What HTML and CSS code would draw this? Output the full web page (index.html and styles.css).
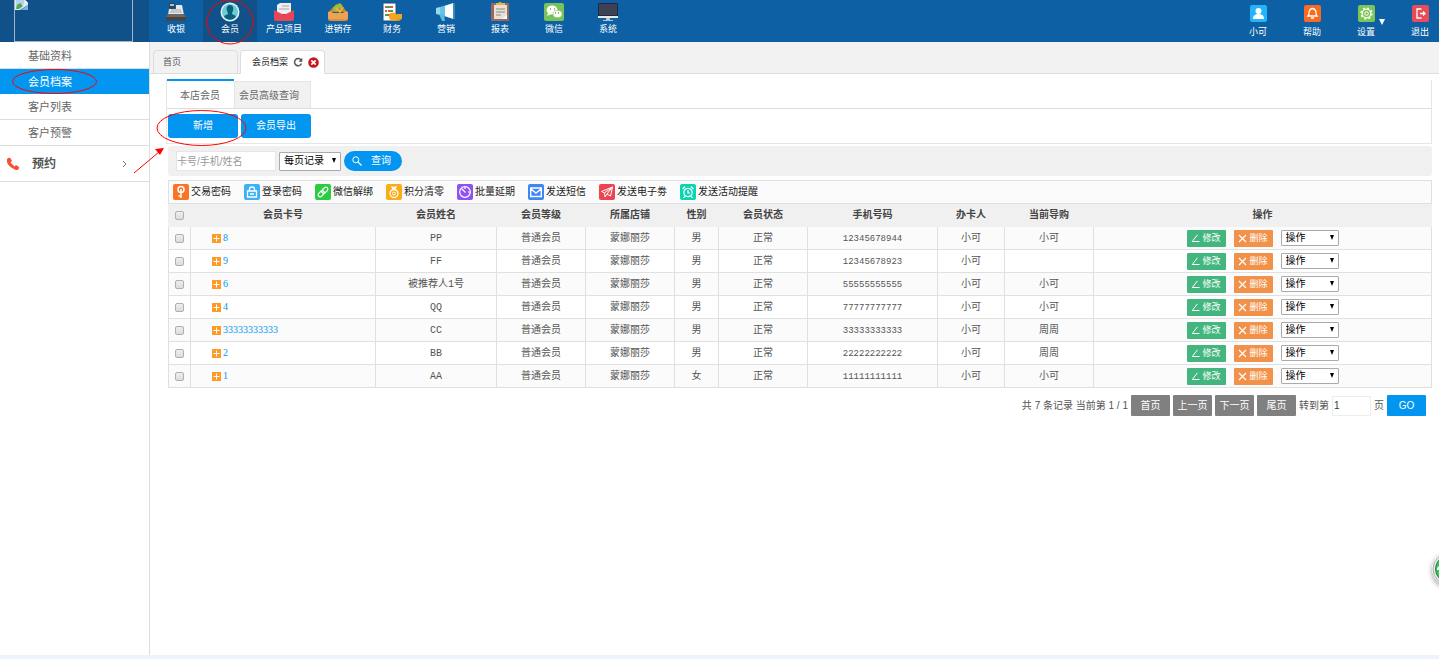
FILE: index.html
```html
<!DOCTYPE html>
<html lang="zh-CN">
<head>
<meta charset="utf-8">
<title>会员档案</title>
<link rel="stylesheet" href="styles.css">
</head>
<body>
<svg class="defs" aria-hidden="true">
  <symbol id="plus" viewBox="0 0 9 9"><rect width="9" height="9" fill="#fd9a28"/><path d="M4.500 1.500v6M1.500 4.500h6" stroke="#fff" stroke-width="1"/></symbol>
  <symbol id="edit" viewBox="0 0 9 9"><path d="M6.500 .8 2 6.500M1 7.500h7.500M2 6.500 1.300 7.500" stroke="#fff" fill="none"/></symbol>
  <symbol id="cross" viewBox="0 0 9 9"><path d="m1 1 7 7M8 1 1 8" stroke="#fff" stroke-width="1.200"/></symbol>
</svg>
<header class="top">
  <div class="brand"><div class="logo">
    <svg width="14" height="11" viewBox="0 0 14 11"><path d="M0 0h10l3 3v2L5 10H0z" fill="#dce9f7"/><path d="M1 0h8v4L2 8H1z" fill="#b5d2f4"/><path d="m1 9 1-4 3-2 3 3-4 3z" fill="#58a843"/><path d="m10 0 3 3h-3z" fill="#fff"/><path d="m6 10 7-5v5z" fill="#7fb3dd"/></svg>
  </div></div>
  <nav class="nav">
    <a href="#"><svg viewBox="0 0 20 20"><path d="M3 1h6v5H3z" fill="#34404c"/><path d="M4 2h4v2H4z" fill="#a9c4d4"/><path d="M5 5h2v3H5z" fill="#34404c"/><path d="M10 3h6l2 10H2l1-6h7z" fill="#e8e8e8"/><path d="M5 8h10M4 10h12" stroke="#a3a9ae"/><path d="M2 12h16l2 3v3H0v-3z" fill="#686868"/><path d="M0 15h20v4H0z" fill="#454545"/></svg>收银</a>
    <a href="#" class="on"><svg viewBox="0 0 20 20"><circle cx="10" cy="10" r="9.500" fill="#e4f4f6"/><circle cx="10" cy="10" r="8" fill="#6ccbd4"/><path d="M10 3c4 0 4 5 2 8v1l4 2c-2 5-10 5-12 0l4-2v-1C6 8 6 3 10 3z" fill="#09627d"/></svg>会员</a>
    <a href="#"><svg viewBox="0 0 20 20"><path d="M1 9h18v10H1z" fill="#b92f3b"/><path d="m3 3 3-2h11v11H3z" fill="#eee"/><path d="M8 4h7M5 7h10" stroke="#a9a9a9"/><path d="m0 8 10 5 10-5v9q0 2-2 2H2q-2 0-2-2z" fill="#e64655"/></svg>产品项目</a>
    <a href="#"><svg viewBox="0 0 20 20"><path d="m1 10 4-5h10l4 5z" fill="#c48638"/><path d="M5 9q0-6 5-7l2-1 3 3-3 2q-3 0-3 4z" fill="#a2b940"/><path d="m8 6 4 4 3-5" fill="none" stroke="#e8b535" stroke-width="2"/><path d="M0 10q3-2 5 1h10q2-3 5-1v6q0 3-3 3H3q-3 0-3-3z" fill="#f0a24d"/><path d="M1 18h18" stroke="#cb7b35"/></svg>进销存</a>
    <a href="#"><svg viewBox="0 0 20 20"><path d="M1 1h13v18H1z" fill="#fff" stroke="#244d75"/><path d="M3 5h9M3 9h9M3 13h6" stroke="#ef4f49" stroke-width="2" stroke-dasharray="2 1"/><path d="M5 5h4M8 9h3M3 13h3" stroke="#45a447" stroke-width="2"/><ellipse cx="15" cy="16" rx="5" ry="3" fill="#e2a124"/><circle cx="11" cy="14.500" r="4" fill="#f4a820"/><path d="M15 12h5v4h-5z" fill="#f0a620"/></svg>财务</a>
    <a href="#"><svg viewBox="0 0 20 20"><path d="m0 6 4-1v8l-4-1z" fill="#9ad6eb"/><path d="m4 5 10-3v14L4 13z" fill="#67c6e8"/><path d="m9 4 8-3v16l-8-3z" fill="#fff"/><path d="M17 1h2v16h-2z" fill="#318eb5"/><path d="M3 12h5l1 7H6z" fill="#5bbbdd"/></svg>营销</a>
    <a href="#"><svg viewBox="0 0 20 20"><rect x="1" y="1" width="18" height="18" rx="1" fill="#a1665a"/><path d="M4 3h13v14H4z" fill="#e7e1d6"/><path d="M6 1h2q2-2 4 0h3v2H6z" fill="#e8b540"/><path d="M6 7h9M6 10h9M6 13h5" stroke="#8e8983"/><path d="M17 13v4h-5z" fill="#fff"/></svg>报表</a>
    <a href="#"><svg viewBox="0 0 20 20"><rect y="1" width="20" height="18" rx="2" fill="#78c257"/><ellipse cx="8" cy="8" rx="5.500" ry="4.500" fill="#fff"/><path d="m4 11-1 3 4-2z" fill="#fff"/><ellipse cx="13.500" cy="12" rx="4.500" ry="3.700" fill="#fff" stroke="#78c257" stroke-width=".6"/><path d="M6 7h1m3 0h1m0 4h1m2 0h1" stroke="#58a53b" stroke-width="1.400"/></svg>微信</a>
    <a href="#"><svg viewBox="0 0 20 20"><rect y="1" width="20" height="15" rx="1" fill="#202a33"/><path d="M1 2h18v11H1z" fill="#3d4057"/><path d="M0 14h20v2H0z" fill="#e5e9ea"/><path d="M8 16h4v2H8zM5 18h10v1H5z" fill="#bac2c7"/></svg>系统</a>
  </nav>
  <div class="user">
    <a href="#"><svg viewBox="0 0 17 17"><rect width="17" height="17" rx="2" fill="#23b4fa"/><circle cx="8.500" cy="6" r="3" fill="#fff"/><path d="M3 14q0-5 5.500-5t5.500 5z" fill="#fff"/></svg>小可</a>
    <a href="#"><svg viewBox="0 0 17 17"><rect width="17" height="17" rx="2" fill="#fb6a1e"/><path d="M4 11q1-1 1-4 1-3.500 3.500-3.500T12 7q0 3 1 4zM7 13h3" fill="none" stroke="#fff" stroke-width="1.300"/></svg>帮助</a>
    <a href="#" class="more"><svg viewBox="0 0 17 17"><rect width="17" height="17" rx="2" fill="#7cc655"/><circle cx="8.500" cy="8.500" r="4.300" fill="none" stroke="#fff" stroke-width="1.200"/><circle cx="8.500" cy="8.500" r="1.800" fill="none" stroke="#fff"/><circle cx="8.500" cy="8.500" r="5.500" fill="none" stroke="#fff" stroke-width="1.300" stroke-dasharray="2 2.320"/></svg>设置</a>
    <a href="#"><svg viewBox="0 0 17 17"><rect width="17" height="17" rx="2" fill="#e94b59"/><path d="M9.500 4H5v9h4.500M8 8.500h5M11 6.500l2 2-2 2" fill="none" stroke="#fff" stroke-width="1.300"/></svg>退出</a>
  </div>
</header>
<div class="body">
  <aside class="side">
    <a href="#">基础资料</a>
    <a href="#" class="on">会员档案</a>
    <a href="#">客户列表</a>
    <a href="#">客户预警</a>
    <a href="#" class="group"><svg width="14" height="14" viewBox="0 0 14 14"><path d="M2 1 4 .8l2 3-1.500 1.700 4 4L10 8l3 2-.2 2q-2 2-5 0Q2 9 1 5q-.6-3 1-4z" fill="#f9502d"/></svg><b>预约</b><svg width="5" height="8" viewBox="0 0 5 8"><path d="m1 1 3 3-3 3" fill="none" stroke="#777"/></svg></a>
  </aside>
  <main class="main">
    <div class="tabs">
      <a href="#" class="tab">首页</a>
      <a href="#" class="tab on">会员档案
        <svg width="10" height="10" viewBox="0 0 10 10"><path d="M8 3a3.600 3.600 0 1 0 .5 3.500" fill="none" stroke="#555" stroke-width="1.500"/><path d="M9.300.8v4H5.500z" fill="#555"/></svg>
        <svg width="11" height="11" viewBox="0 0 11 11"><circle cx="5.500" cy="5.500" r="5.300" fill="#c9151e"/><path d="m3.300 3.300 4.400 4.400m0-4.400L3.300 7.700" stroke="#fff" stroke-width="1.700"/></svg>
      </a>
    </div>
    <section class="panel">
      <div class="subtabs"><a href="#" class="on">本店会员</a><a href="#">会员高级查询</a></div>
      <div class="actions"><button type="button">新增</button><button type="button">会员导出</button></div>
    </section>
    <div class="content">
      <form class="search">
        <input type="text" placeholder="卡号/手机/姓名" aria-label="卡号/手机/姓名">
        <span class="pick size"><select aria-label="每页记录"><option>每页记录</option></select></span>
        <button type="button"><svg width="10" height="10" viewBox="0 0 10 10"><circle cx="3.800" cy="3.800" r="3" fill="none" stroke="#fff"/><path d="m6 6 3.500 3.500" stroke="#fff" stroke-width="1.300"/></svg>查询</button>
      </form>
      <div class="tools">
        <a href="#"><svg viewBox="0 0 16 16"><rect width="16" height="16" rx="2" fill="#f97427"/><circle cx="8" cy="5.500" r="3" fill="none" stroke="#fff" stroke-width="1.500"/><path d="M8 5v9M8 12h-2.500" stroke="#fff" stroke-width="1.500"/></svg>交易密码</a>
        <a href="#"><svg viewBox="0 0 16 16"><rect width="16" height="16" rx="2" fill="#3db1f8"/><path d="M3.500 7h9v6h-9zM5.500 7V5q0-2 2.500-2t2.500 2v2M6 10h4" fill="none" stroke="#fff" stroke-width="1.300"/></svg>登录密码</a>
        <a href="#"><svg viewBox="0 0 16 16"><rect width="16" height="16" rx="2" fill="#29cc43"/><g transform="rotate(-45 8 8)" fill="none" stroke="#fff" stroke-width="1.200"><rect x="2" y="6" width="7" height="4" rx="2"/><rect x="7" y="6" width="7" height="4" rx="2"/></g></svg>微信解绑</a>
        <a href="#"><svg viewBox="0 0 16 16"><rect width="16" height="16" rx="2" fill="#faad17"/><path d="M5 2q3 1.500 6 0L9.500 5.500h-3z" fill="#fff"/><circle cx="8" cy="9.500" r="4" fill="none" stroke="#fff" stroke-width="1.300"/><circle cx="8" cy="9.500" r="1.500" fill="none" stroke="#fff"/></svg>积分清零</a>
        <a href="#"><svg viewBox="0 0 16 16"><rect width="16" height="16" rx="2" fill="#8d52f4"/><circle cx="8" cy="8" r="5.300" fill="none" stroke="#fff" stroke-width="1.200"/><path d="m5 5 3.500 3.500M8 3v2M11 8h2" stroke="#fff" stroke-width="1.200"/></svg>批量延期</a>
        <a href="#"><svg viewBox="0 0 16 16"><rect width="16" height="16" rx="2" fill="#3d86f7"/><path d="M2.700 4h10.600v8.500H2.700z M3 5l5 4 5-4" fill="none" stroke="#fff" stroke-width="1.400"/></svg>发送短信</a>
        <a href="#"><svg viewBox="0 0 16 16"><rect width="16" height="16" rx="2" fill="#ed4452"/><path d="M2.500 7.500 13.500 3l-2 9L8 10l-2 3-.5-4zM5.500 9l8-6L8 10" fill="none" stroke="#fff"/></svg>发送电子劵</a>
        <a href="#"><svg viewBox="0 0 16 16"><rect width="16" height="16" rx="2" fill="#08d5b1"/><circle cx="8" cy="8.500" r="4.200" fill="none" stroke="#fff" stroke-width="1.200"/><path d="M8 6v3h2M2.500 5 5 2.500M13.500 5 11 2.500M5 12l-1.500 2M11 12l1.500 2" fill="none" stroke="#fff" stroke-width="1.200"/></svg>发送活动提醒</a>
      </div>
      <table class="grid">
        <colgroup><col class="c-check"><col class="c-card"><col class="c-name"><col class="c-mid"><col class="c-mid"><col class="c-sex"><col class="c-mid"><col class="c-phone"><col class="c-by"><col class="c-mid"><col></colgroup>
        <thead><tr><th><input type="checkbox" aria-label="全选"></th><th>会员卡号</th><th>会员姓名</th><th>会员等级</th><th>所属店铺</th><th>性别</th><th>会员状态</th><th>手机号码</th><th>办卡人</th><th>当前导购</th><th>操作</th></tr></thead>
        <tbody>
          <tr><td><input type="checkbox" aria-label="8"></td><td class="card"><a href="#"><svg><use href="#plus"/></svg>8</a></td><td>PP</td><td>普通会员</td><td>蒙娜丽莎</td><td>男</td><td>正常</td><td>12345678944</td><td>小可</td><td>小可</td><td><div class="ops"><button type="button" class="edit"><svg><use href="#edit"/></svg>修改</button><button type="button" class="del"><svg><use href="#cross"/></svg>删除</button><span class="pick"><select aria-label="操作"><option>操作</option></select></span></div></td></tr>
          <tr><td><input type="checkbox" aria-label="9"></td><td class="card"><a href="#"><svg><use href="#plus"/></svg>9</a></td><td>FF</td><td>普通会员</td><td>蒙娜丽莎</td><td>男</td><td>正常</td><td>12345678923</td><td>小可</td><td></td><td><div class="ops"><button type="button" class="edit"><svg><use href="#edit"/></svg>修改</button><button type="button" class="del"><svg><use href="#cross"/></svg>删除</button><span class="pick"><select aria-label="操作"><option>操作</option></select></span></div></td></tr>
          <tr><td><input type="checkbox" aria-label="6"></td><td class="card"><a href="#"><svg><use href="#plus"/></svg>6</a></td><td>被推荐人1号</td><td>普通会员</td><td>蒙娜丽莎</td><td>男</td><td>正常</td><td>55555555555</td><td>小可</td><td>小可</td><td><div class="ops"><button type="button" class="edit"><svg><use href="#edit"/></svg>修改</button><button type="button" class="del"><svg><use href="#cross"/></svg>删除</button><span class="pick"><select aria-label="操作"><option>操作</option></select></span></div></td></tr>
          <tr><td><input type="checkbox" aria-label="4"></td><td class="card"><a href="#"><svg><use href="#plus"/></svg>4</a></td><td>QQ</td><td>普通会员</td><td>蒙娜丽莎</td><td>男</td><td>正常</td><td>77777777777</td><td>小可</td><td>小可</td><td><div class="ops"><button type="button" class="edit"><svg><use href="#edit"/></svg>修改</button><button type="button" class="del"><svg><use href="#cross"/></svg>删除</button><span class="pick"><select aria-label="操作"><option>操作</option></select></span></div></td></tr>
          <tr><td><input type="checkbox" aria-label="33333333333"></td><td class="card"><a href="#"><svg><use href="#plus"/></svg>33333333333</a></td><td>CC</td><td>普通会员</td><td>蒙娜丽莎</td><td>男</td><td>正常</td><td>33333333333</td><td>小可</td><td>周周</td><td><div class="ops"><button type="button" class="edit"><svg><use href="#edit"/></svg>修改</button><button type="button" class="del"><svg><use href="#cross"/></svg>删除</button><span class="pick"><select aria-label="操作"><option>操作</option></select></span></div></td></tr>
          <tr><td><input type="checkbox" aria-label="2"></td><td class="card"><a href="#"><svg><use href="#plus"/></svg>2</a></td><td>BB</td><td>普通会员</td><td>蒙娜丽莎</td><td>男</td><td>正常</td><td>22222222222</td><td>小可</td><td>周周</td><td><div class="ops"><button type="button" class="edit"><svg><use href="#edit"/></svg>修改</button><button type="button" class="del"><svg><use href="#cross"/></svg>删除</button><span class="pick"><select aria-label="操作"><option>操作</option></select></span></div></td></tr>
          <tr><td><input type="checkbox" aria-label="1"></td><td class="card"><a href="#"><svg><use href="#plus"/></svg>1</a></td><td>AA</td><td>普通会员</td><td>蒙娜丽莎</td><td>女</td><td>正常</td><td>11111111111</td><td>小可</td><td>小可</td><td><div class="ops"><button type="button" class="edit"><svg><use href="#edit"/></svg>修改</button><button type="button" class="del"><svg><use href="#cross"/></svg>删除</button><span class="pick"><select aria-label="操作"><option>操作</option></select></span></div></td></tr>
        </tbody>
      </table>
      <div class="pager">
        <span>共 7 条记录 当前第 1 / 1</span>
        <button type="button">首页</button><button type="button">上一页</button><button type="button">下一页</button><button type="button">尾页</button>
        <label for="page">转到第</label><input id="page" type="text" value="1"><span>页</span>
        <button type="button" class="go">GO</button>
      </div>
    </div>
  </main>
</div>
<footer class="foot"></footer>
<div class="float"><svg width="34" height="34" viewBox="0 0 34 34"><circle cx="17" cy="17" r="16" fill="#e8e8e8" stroke="#aaa"/><circle cx="17" cy="17" r="13.500" fill="#34c759" stroke="#238343"/><path d="m5 16 4-4v3h8v3H5z" fill="#fff"/></svg></div>
<svg class="marks" width="340" height="190" aria-hidden="true"><g fill="none" stroke="#f00"><ellipse cx="230" cy="22" rx="23" ry="22"/><ellipse cx="54.500" cy="81.500" rx="42" ry="12"/><ellipse cx="201.500" cy="128" rx="44.500" ry="17.500"/><path d="m134 173 25-21"/></g><path d="m164 148-4 7-5-6z" fill="#f00"/></svg>
</body>
</html>
```
FILE: styles.css
```css
* { box-sizing: border-box; }
body { margin: 0; min-height: 100vh; display: flex; flex-direction: column; overflow-x: hidden; background: #fff; color: #555; font: 10px/14px "Liberation Sans", "Noto Sans CJK SC", sans-serif; }
a { color: inherit; text-decoration: none; }
button, input, select { font: inherit; margin: 0; padding: 0; border: 0; border-radius: 0; }
button { color: #fff; cursor: pointer; }
svg { flex: none; display: block; }
.defs { position: absolute; width: 0; height: 0; }

.top { display: flex; height: 42px; background: #0c60a3; color: #fff; font-size: 9px; }
.brand { width: 149px; padding: 0 16px 0 14px; background: #0f5188; }
.logo { height: 42px; border: 1px solid #a3b4c2; border-top: 0; }
.nav { flex: 1; display: flex; }
.nav a { width: 54px; padding-top: 2px; display: flex; flex-direction: column; align-items: center; }
.nav svg { width: 20px; height: 20px; }
.nav .on { background: #0f5188; }
.user { display: flex; gap: 16px; }
.user a { width: 38px; padding-top: 5px; display: flex; flex-direction: column; align-items: center; gap: 3px; position: relative; }
.user svg { width: 17px; height: 17px; }
.more::after { content: ""; position: absolute; right: 0; top: 19px; border: 3px solid transparent; border-top: 6px solid #fff; border-bottom: 0; }

.body { flex: 1; display: flex; }
.side { width: 150px; padding-top: 1px; border-right: 1px solid #ddd; color: #666; font-size: 11px; line-height: 26px; }
.side a { display: block; height: 26px; padding-left: 28px; border-bottom: 1px solid #ddd; }
.side .on { height: 25px; background: #0396f1; color: #fff; border: 0; }
.side .group { height: 36px; padding: 0 22px 0 6px; display: flex; align-items: center; font-size: 12px; }
.group b { flex: 1; margin-left: 12px; color: #555; }

.main { flex: 1; min-width: 0; }
.tabs { height: 32px; padding: 8px 3px 0; display: flex; gap: 2px; background: #f2f2f2; border-bottom: 1px solid #ddd; color: #555; font-size: 9px; }
.tab { width: 85px; height: 24px; padding: 0 9px; display: flex; align-items: center; gap: 5px; border: 1px solid #ddd; border-radius: 4px 4px 0 0; }
.tab.on { padding: 0 0 0 11px; background: #fff; border-bottom-color: #fff; color: #222; }
.panel { margin: 6px 7px 0 16px; border: 1px solid #e6e6e6; border-top: 0; }
.subtabs { display: flex; height: 29px; align-items: flex-end; border-bottom: 1px solid #ddd; color: #666; }
.subtabs a { height: 27px; padding: 0 11px 0 4px; line-height: 28px; background: #f1f1f1; border: 1px solid #e4e4e4; border-bottom: 0; }
.subtabs .on { height: 29px; padding: 0 14px 0 13px; line-height: 29px; background: #fff; border: 0; border-top: 2px solid #0396f1; }
.actions { display: flex; gap: 3px; padding: 5px 1px; }
.actions button { width: 70px; height: 24px; background: #0396f1; border-radius: 3px; }

.content { margin: 2px 7px 0 18px; }
.search { display: flex; align-items: center; gap: 3px; height: 30px; padding-left: 8px; background: #f0f0f0; border-radius: 3px; }
.search input { width: 100px; height: 20px; padding-left: 0; border: 1px solid #e6e6e6; background: #fff; }
.search input::placeholder { color: #999; }
.search button { width: 58px; height: 20px; padding-left: 8px; display: flex; align-items: center; gap: 9px; background: #0396f1; border-radius: 10px; }
.pick { position: relative; width: 58px; height: 16px; }
.pick select { display: block; width: 100%; height: 100%; padding: 0 14px 0 4px; appearance: none; background: #fff; border: 1px solid #aaa; border-radius: 1px; color: #000; }
.pick::after { content: ""; position: absolute; right: 5px; top: 50%; margin-top: -3px; border: 2px solid transparent; border-top: 5px solid #000; border-bottom: 0; pointer-events: none; }
.pick.size { width: 62px; height: 19px; }

.tools { display: flex; align-items: center; gap: 13px; height: 24px; margin-top: 4px; padding-left: 4px; border: 1px solid #e0e0e0; background: #fbfbfb; color: #222; }
.tools a { display: flex; align-items: center; gap: 2px; }
.tools svg { width: 16px; height: 16px; }

.grid { width: 100%; table-layout: fixed; border-collapse: collapse; font-family: "Liberation Mono", "Noto Sans CJK SC", monospace; }
.c-check { width: 22px; }
.c-card { width: 185px; }
.c-name { width: 121px; }
.c-mid { width: 89px; }
.c-sex { width: 44px; }
.c-phone { width: 130px; }
.c-by { width: 67px; }
.grid tr { height: 23px; }
.grid thead tr { height: 22px; }
.grid th, .grid td { padding: 0; text-align: center; border: 1px solid #e0e0e0; line-height: 14px; }
.grid td:nth-child(n+3):not(:last-child) { padding-top: 1px; }
.grid th { background: #f0f0f0; border-color: #f0f0f0; color: #444; }
.grid td { font-size: 9px; }
.grid td:not(:nth-child(8)) { font-size: 10px; }
.grid tbody tr:nth-child(odd) { background: #fbfbfb; }
.grid input { display: block; width: 9px; height: 9px; margin: 0 auto; appearance: none; border: 1px solid #b0b0b0; border-radius: 2px; background: linear-gradient(#eee, #dcdcdc); }
.card a { display: flex; align-items: center; gap: 2px; padding-left: 21px; color: #0396f1; font-family: "Liberation Serif", serif; }
.card svg { width: 9px; height: 9px; }
.ops { display: flex; justify-content: center; gap: 8px; font-family: "Liberation Sans", "Noto Sans CJK SC", sans-serif; }
.ops button { width: 39px; height: 17px; display: flex; align-items: center; justify-content: center; gap: 2px; border-radius: 1px; font-size: 9px; }
.ops svg { width: 9px; height: 9px; }
.edit { background: #43b680; }
.del { background: #f2914a; }

.pager { display: flex; justify-content: flex-end; align-items: center; gap: 3px; padding: 7px 6px 0 0; }
.pager button { width: 39px; height: 21px; background: #808080; border-radius: 1px; }
.pager input { width: 39px; height: 20px; padding-left: 1px; border: 1px solid #eee; color: #333; }
.pager .go { background: #0396f1; }
.foot { height: 4px; background: #eef3fb; }
.float { position: fixed; right: -27px; top: 552px; border-radius: 50%; box-shadow: 0 2px 5px #999; }
.marks { position: absolute; left: 0; top: 0; pointer-events: none; }
```
